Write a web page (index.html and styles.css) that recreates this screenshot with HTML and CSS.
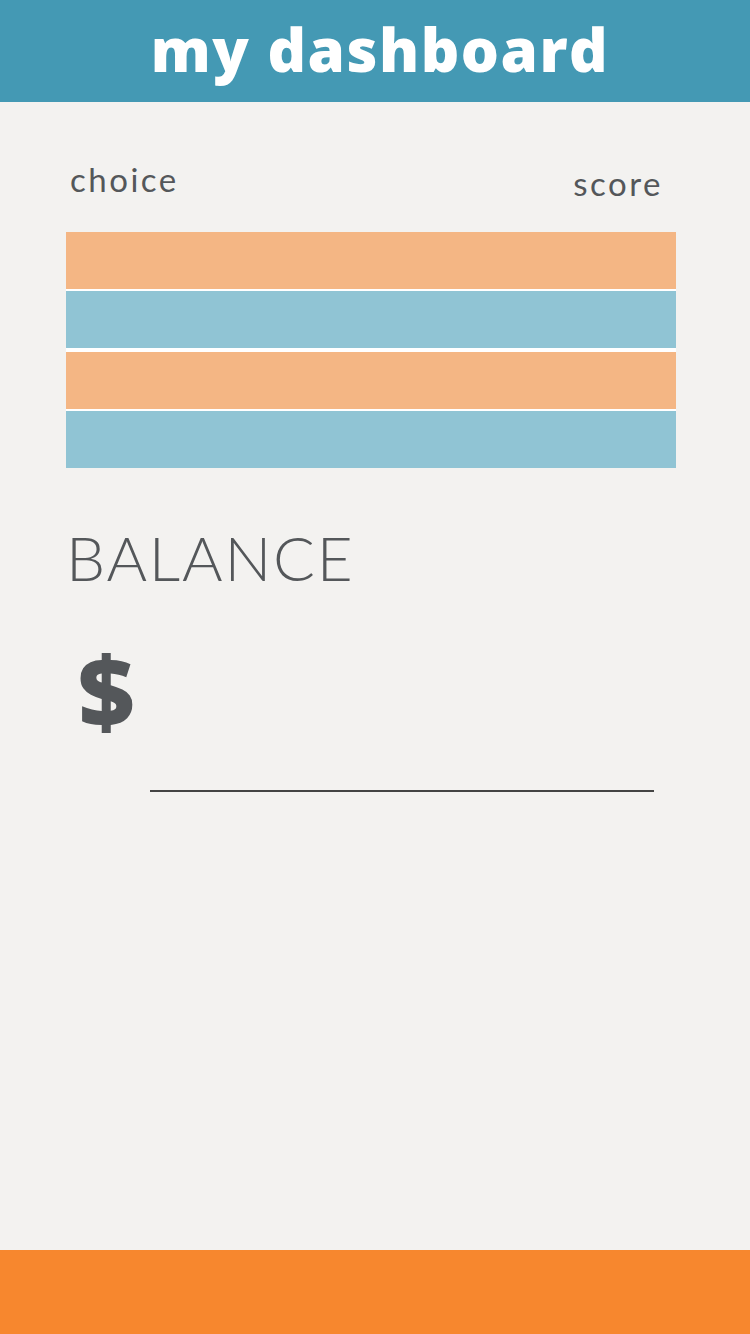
FILE: index.html
```html
<!DOCTYPE html>
<html lang="en">
<head>
<meta charset="utf-8">
<title>my dashboard</title>
<link rel="stylesheet" href="styles.css">
</head>
<body>
<div class="app">
  <header class="topbar"><h1 class="title">my dashboard</h1></header>
  <main class="content">
    <div class="labels">
      <span class="label choice">choice</span>
      <span class="label score">score</span>
    </div>
    <div class="bars">
      <div class="bar bar-orange"></div>
      <div class="bar bar-blue"></div>
      <div class="bar bar-orange bar-gap"></div>
      <div class="bar bar-blue"></div>
    </div>
    <h2 class="balance">BALANCE</h2>
    <div class="amount">
      <span class="dollar">$</span>
      <div class="amount-line"></div>
    </div>
  </main>
  <footer class="bottombar"></footer>
</div>
</body>
</html>
```

FILE: styles.css
```css
html, body {
  margin: 0;
  padding: 0;
}
body {
  background: #f3f2f0;
  font-family: "Lato", "Noto Sans", sans-serif;
  color: #54575a;
}
.app {
  display: flex;
  flex-direction: column;
  width: 750px;
  height: 1334px;
}
.topbar {
  height: 102px;
  background: #4499b4;
  display: flex;
  align-items: center;
  justify-content: center;
}
.title {
  margin: 0 0 0 10px;
  color: #ffffff;
  font-family: "Open Sans", "Lato", sans-serif;
  font-size: 60px;
  font-weight: 800;
  letter-spacing: 1.5px;
  line-height: 1;
  padding-bottom: 4px;
}
.content {
  flex: 1;
  padding: 0 74px 0 66px;
}
.labels {
  display: flex;
  justify-content: space-between;
  align-items: flex-end;
  margin-top: 54px;
  padding: 0 13px 0 4px;
  height: 40px;
}
.label {
  font-size: 33px;
  line-height: 1;
  letter-spacing: 2.5px;
}
.score {
  position: relative;
  top: 4px;
}
.bars {
  margin-top: 36px;
  display: flex;
  flex-direction: column;
  gap: 2px;
  background: #ffffff;
}
.bar {
  height: 57px;
}
.bar-gap {
  margin-top: 2px;
}
.bar-orange {
  background: #f4b684;
}
.bar-blue {
  background: #90c4d4;
}
.balance {
  margin: 58px 0 0 0;
  font-size: 62px;
  font-weight: 300;
  letter-spacing: 1.8px;
  line-height: 1;
}
.amount {
  position: relative;
  height: 260px;
}
.dollar {
  position: absolute;
  left: 12px;
  top: 52px;
  font-family: "Open Sans", "Lato", sans-serif;
  font-size: 98px;
  font-weight: 800;
  line-height: 1;
}
.amount-line {
  position: absolute;
  left: 84px;
  top: 202px;
  width: 504px;
  height: 2px;
  background: #444444;
}
.bottombar {
  height: 84px;
  background: #f7872e;
}
```
